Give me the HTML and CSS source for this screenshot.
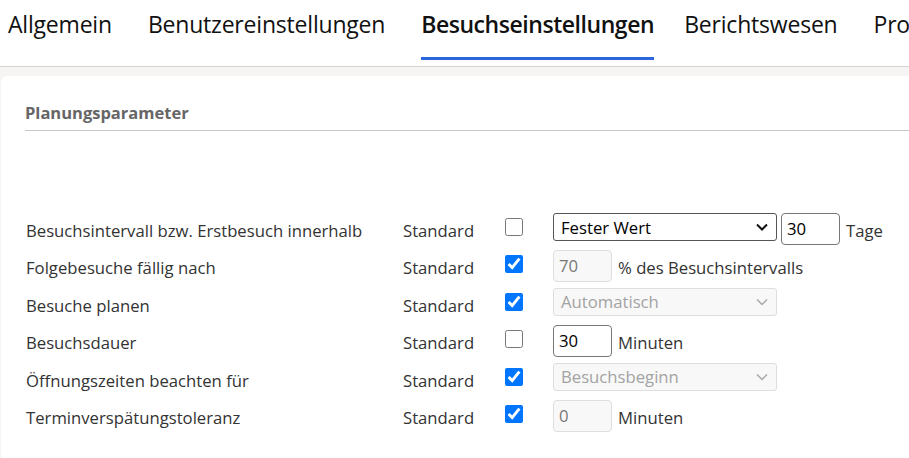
FILE: index.html
```html
<!DOCTYPE html>
<html lang="de">
<head>
<meta charset="utf-8">
<title>Besuchseinstellungen</title>
<link rel="stylesheet" href="styles.css">
</head>
<body>
<nav class="tabs">
  <div class="tab">Allgemein</div>
  <div class="tab">Benutzereinstellungen</div>
  <div class="tab active">Besuchseinstellungen</div>
  <div class="tab">Berichtswesen</div>
  <div class="tab">Prognose</div>
</nav>
<div class="band">
  <section class="card">
    <h2 class="section-title">Planungsparameter</h2>
    <div class="rows">
      <div class="row">
        <div class="label">Besuchsintervall bzw. Erstbesuch innerhalb</div>
        <div class="std">Standard</div>
        <div class="chk"><input type="checkbox"></div>
        <div class="ctrl">
          <div class="select wide"><span>Fester Wert</span><svg class="chev" viewBox="0 0 12 8" width="12" height="8"><path d="M1 1.5 L6 6.5 L11 1.5" fill="none" stroke="currentColor" stroke-width="2"/></svg></div>
          <div class="input small gap">30</div>
          <span class="unit">Tage</span>
        </div>
      </div>
      <div class="row">
        <div class="label">Folgebesuche fällig nach</div>
        <div class="std">Standard</div>
        <div class="chk"><input type="checkbox" checked></div>
        <div class="ctrl">
          <div class="input small disabled">70</div>
          <span class="unit">% des Besuchsintervalls</span>
        </div>
      </div>
      <div class="row">
        <div class="label">Besuche planen</div>
        <div class="std">Standard</div>
        <div class="chk"><input type="checkbox" checked></div>
        <div class="ctrl">
          <div class="select wide disabled"><span>Automatisch</span><svg class="chev" viewBox="0 0 12 8" width="12" height="8"><path d="M1 1.5 L6 6.5 L11 1.5" fill="none" stroke="currentColor" stroke-width="1.5"/></svg></div>
        </div>
      </div>
      <div class="row">
        <div class="label">Besuchsdauer</div>
        <div class="std">Standard</div>
        <div class="chk"><input type="checkbox"></div>
        <div class="ctrl">
          <div class="input small">30</div>
          <span class="unit">Minuten</span>
        </div>
      </div>
      <div class="row">
        <div class="label">Öffnungszeiten beachten für</div>
        <div class="std">Standard</div>
        <div class="chk"><input type="checkbox" checked></div>
        <div class="ctrl">
          <div class="select wide disabled"><span>Besuchsbeginn</span><svg class="chev" viewBox="0 0 12 8" width="12" height="8"><path d="M1 1.5 L6 6.5 L11 1.5" fill="none" stroke="currentColor" stroke-width="1.5"/></svg></div>
        </div>
      </div>
      <div class="row">
        <div class="label">Terminverspätungstoleranz</div>
        <div class="std">Standard</div>
        <div class="chk"><input type="checkbox" checked></div>
        <div class="ctrl">
          <div class="input small disabled">0</div>
          <span class="unit">Minuten</span>
        </div>
      </div>
    </div>
  </section>
</div>
</body>
</html>
```
FILE: styles.css
```css
* { box-sizing: border-box; }
html, body { margin: 0; padding: 0; }
body {
  width: 909px;
  height: 458px;
  overflow: hidden;
  background: #fff;
  font-family: "Open Sans", "Noto Sans", sans-serif;
  color: #333;
}
.tabs {
  display: flex;
  height: 67px;
  padding-left: 8px;
  white-space: nowrap;
  border-bottom: 1px solid #d4d2cf;
  gap: 36px;
  overflow: hidden;
}
.tab {
  font-size: 23px;
  letter-spacing: -0.2px;
  color: #111;
  padding-top: 8px;
  height: 60px;
  border-bottom: 3px solid transparent;
}
.tab.active {
  font-weight: 600;
  letter-spacing: -0.45px;
  border-bottom-color: #2a66dd;
  margin-right: -6px;
}
.band {
  background: #f6f5f3;
  padding-top: 9px;
}
.card {
  background: #fff;
  border-top-left-radius: 6px;
  margin-left: 1px;
  height: 400px;
  padding: 24px 0 0 24px;
}
.section-title {
  margin: 0;
  font-size: 16.5px;
  font-weight: 700;
  color: #666;
  padding-bottom: 4px;
  border-bottom: 1px solid #c8c8c8;
  line-height: 26px;
  padding-left: 0;
}
.rows {
  margin-top: 82px;
  padding-left: 1px;
}
.row {
  display: flex;
  align-items: flex-start;
  height: 37.4px;
  font-size: 16.7px;
}
.label {
  width: 377px;
  line-height: 32px;
  padding-top: 2px;
  color: #333;
}
.std {
  width: 102px;
  line-height: 32px;
  padding-top: 2px;
}
.chk {
  width: 48px;
  padding-top: 5px;
}
.chk input {
  width: 18px;
  height: 18px;
  margin: 0;
}
.ctrl {
  display: flex;
  align-items: flex-start;
}
.select {
  display: flex;
  align-items: center;
  justify-content: space-between;
  height: 28px;
  border: 1px solid #555;
  border-radius: 3px;
  padding: 0 8px 0 7px;
  color: #000;
}
.select.wide { width: 224px; }
.chev { color: #111; }
.input {
  height: 32px;
  border: 1px solid #767676;
  border-radius: 4px;
  padding-left: 5px;
  line-height: 30px;
  color: #000;
}
.input.small { width: 59px; }
.input.gap { margin-left: 4px; }
.disabled {
  background: #f8f8f8;
  border-color: #dedede;
  color: #777;
}
.select.disabled { color: #a3a3a3; }
.select.disabled .chev { color: #a8a8a8; }
.unit {
  margin-left: 6px;
  line-height: 32px;
  padding-top: 2px;
}
```
